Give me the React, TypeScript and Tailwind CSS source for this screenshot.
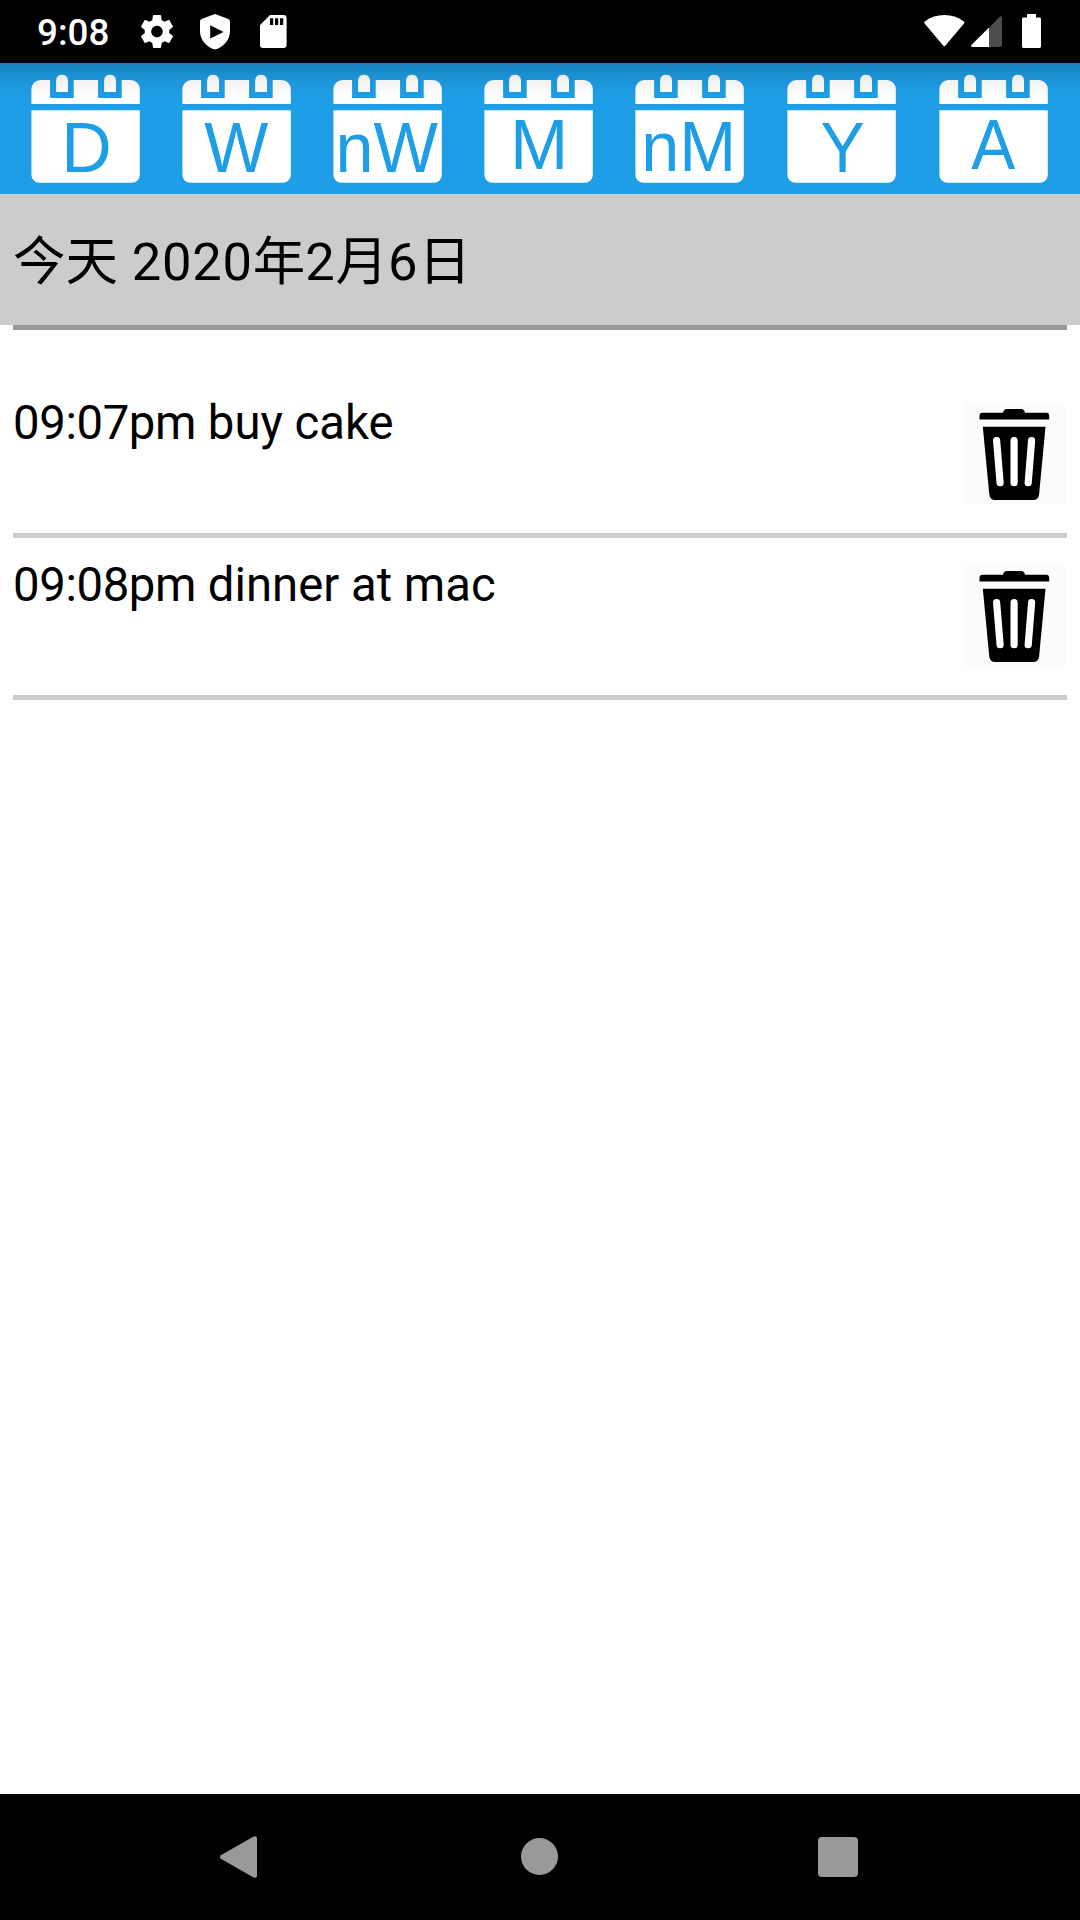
const GEAR =
  'M19.43 12.98c.04-.32.07-.64.07-.98s-.03-.66-.07-.98l2.11-1.65c.19-.15.24-.42.12-.64l-2-3.46c-.12-.22-.39-.3-.61-.22l-2.49 1c-.52-.4-1.08-.73-1.69-.98l-.38-2.65C14.46 2.18 14.25 2 14 2h-4c-.25 0-.46.18-.49.42l-.38 2.65c-.61.25-1.17.59-1.69.98l-2.49-1c-.23-.09-.49 0-.61.22l-2 3.46c-.13.22-.07.49.12.64l2.11 1.65c-.04.32-.07.65-.07.98s.03.66.07.98l-2.11 1.65c-.19.15-.24.42-.12.64l2 3.46c.12.22.39.3.61.22l2.49-1c.52.4 1.08.73 1.69.98l.38 2.65c.03.24.24.42.49.42h4c.25 0 .46-.18.49-.42l.38-2.65c.61-.25 1.17-.59 1.69-.98l2.49 1c.23.09.49 0 .61-.22l2-3.46c.12-.22.07-.49-.12-.64l-2.11-1.65zM12 15.5c-1.93 0-3.5-1.57-3.5-3.5s1.57-3.5 3.5-3.5 3.5 1.57 3.5 3.5-1.57 3.5-3.5 3.5z';

type Tab = { label: string; x: number; baseline: number; width: number; gap: string };

// x is the pen position, baseline and width are the label's placement inside the 109px icon
const tabs: Tab[] = [
  { label: 'D', x: 29.8, baseline: 97.5, width: 50.5, gap: '' },
  { label: 'W', x: 21.8, baseline: 97.5, width: 64, gap: 'ml-[42px]' },
  { label: 'nW', x: 2.2, baseline: 97.8, width: 102.5, gap: 'ml-[42px]' },
  { label: 'M', x: 25.7, baseline: 95.2, width: 58.3, gap: 'ml-[42px]' },
  { label: 'nM', x: 5.9, baseline: 96.5, width: 95, gap: 'ml-[42px]' },
  { label: 'Y', x: 33, baseline: 97.8, width: 44.2, gap: 'ml-[43px]' },
  { label: 'A', x: 31.9, baseline: 95.2, width: 44, gap: 'ml-[43px]' },
];

const events = [
  { time: '09:07pm', title: 'buy cake' },
  { time: '09:08pm', title: 'dinner at mac' },
];

function CalendarTab({ label, x, baseline, width, gap }: Tab) {
  return (
    <button className={`block h-[109px] w-[109px] shrink-0 ${gap}`} aria-label={label}>
      <svg viewBox="-0.4 0 109 109" className="block h-full w-full overflow-visible">
        <path
          fill="#fff"
          d="M9 6H18.7V24H42.3V6H66.7V24H90.3V6H99.4A9 9 0 0 1 108.4 15V30H0V15A9 9 0 0 1 9 6ZM24.7 18V6A6 6 0 0 1 36.6 6V18ZM72.7 18V6A6 6 0 0 1 84.6 6V18ZM0 36.3H108.4V100.8A8 8 0 0 1 100.4 108.8H8A8 8 0 0 1 0 100.8Z"
        />
        <text
          x={x}
          y={baseline}
          textLength={width}
          lengthAdjust="spacingAndGlyphs"
          fill="#1e9ee6"
          fontSize="71"
          fontFamily="'Liberation Sans', sans-serif"
        >
          {label}
        </text>
      </svg>
    </button>
  );
}

function StatusBar() {
  return (
    <header className="flex h-[63px] items-center bg-black pl-[37px] text-white">
      <span className="w-[104px] pt-[2px] text-[36.75px] leading-[61px] font-medium">9:08</span>
      <svg viewBox="2.25 2 19.5 20" className="h-[33px] w-[32px]" fill="#fff">
        <path d={GEAR} />
      </svg>
      <svg viewBox="0 0 30 36" className="ml-[27px] h-[36px] w-[30px]" fill="#fff" fillRule="evenodd">
        <path d="M15 0L28.4 5Q30 5.7 30 7.4V17C30 25.5 24 33 15 35.6C6 33 0 25.5 0 17V7.4Q0 5.7 1.6 5ZM10.2 11.2V24.6L23.6 17.9Z" />
      </svg>
      <svg viewBox="0 0 27 33" className="ml-[30px] h-[33px] w-[27px]" fill="#fff" fillRule="evenodd">
        <path d="M10 0H23.6Q26.6 0 26.6 3V30Q26.6 33 23.6 33H3Q0 33 0 30V10ZM10 3.3V10H13.2V3.3ZM15 3.3V10H18.2V3.3ZM20 3.3V10H23.2V3.3Z" />
      </svg>
      <svg viewBox="0 0 41 32" className="mr-[6px] mb-[2px] ml-auto h-[32px] w-[41px]" fill="#fff">
        <path d="M.6 8.4Q-.4 7.4.8 6.4C6.5 2 13 0 20.3 0S34 2 39.8 6.4Q41 7.4 40 8.4L21.5 30.6Q20.3 32 19.1 30.6Z" />
      </svg>
      <svg viewBox="0 0 31 31" className="mr-[20px] h-[31px] w-[31px]">
        <path fill="#4d4d4d" d="M18 12L28.8 .6Q31 -.6 31 1.8V29Q31 31 29 31H18Z" />
        <path fill="#fff" d="M18 11.4V31H1.6Q-.8 31 .6 28.8Z" />
      </svg>
      <svg viewBox="0 0 19 34" className="mr-[39px] mb-px h-[34px] w-[19px]" fill="#fff">
        <path d="M5 0H14V3.5H17.6Q19 3.5 19 4.9V32.6Q19 34 17.6 34H1.4Q0 34 0 32.6V4.9Q0 3.5 1.4 3.5H5Z" />
      </svg>
    </header>
  );
}

function TrashIcon() {
  return (
    <svg viewBox="963.5 403 103 102" className="block h-[102px] w-[103px]">
      <path d="M980 419.4V415.6Q980 412.7 983 412.7H1003.6Q1004 409 1007.5 409H1021.5Q1025 409 1025.4 412.7H1046.7Q1049.7 412.7 1049.7 415.6V419.4Z" />
      <path d="M983.3 426.8H1046L1039.6 494.5Q1038.8 500 1033.5 500H995.8Q990.5 500 989.8 494.5Z" />
      <path
        d="M997.1 440.5L1000.6 482.7M1014.6 440.5V482.7M1032.1 440.5L1028.7 482.7"
        stroke="#fff"
        strokeWidth="7.2"
        strokeLinecap="round"
      />
    </svg>
  );
}

export default function App() {
  return (
    <div className="flex h-[1920px] w-[1080px] flex-col overflow-hidden bg-white font-[Roboto,'Noto_Sans_CJK_SC',sans-serif] text-black">
      <StatusBar />
      <nav className="relative flex h-[131px] shrink-0 items-start bg-[#1e9ee6] pt-[11px] pl-[31px]">
        {tabs.map((tab) => (
          <CalendarTab key={tab.label} {...tab} />
        ))}
        <div className="pointer-events-none absolute inset-x-0 top-0 h-[36px] bg-linear-to-b from-black/18 via-black/5 to-transparent" />
      </nav>
      <h1 className="h-[131px] shrink-0 bg-[#cccccc] pl-[13px] text-[52.5px] leading-[136px] font-normal whitespace-nowrap">
        今天<span className="tracking-[0.75px]"> 2020</span>年<span className="tracking-[0.75px]">2</span>月
        <span className="tracking-[0.75px]">6</span>日
      </h1>
      <main className="flex-1 px-[13px]">
        <div className="h-[5px] bg-[#999999]" />
        <ul className="pt-[46px]">
          {events.map((event) => (
            <li
              key={event.time}
              className="flex h-[162px] items-start justify-between border-b-[5px] border-[#cccccc]"
            >
              <span className="pt-[19px] text-[47.25px] leading-[56px] whitespace-nowrap">
                <span className="tracking-[-0.36px]">{event.time}</span> {event.title}
              </span>
              <button className="mt-[27px] mr-px bg-[#fcfcfc]" aria-label="Delete">
                <TrashIcon />
              </button>
            </li>
          ))}
        </ul>
      </main>
      <footer className="flex h-[126px] shrink-0 items-center bg-black">
        <svg viewBox="0 0 37 42" className="ml-[220px] h-[42px] w-[37px]" fill="#999">
          <path d="M.8 19.2L33.6 .5Q37 -.8 37 2.6V39.4Q37 42.8 33.6 41.5L.8 22.8Q-.8 21 .8 19.2Z" />
        </svg>
        <div className="mb-px ml-[264px] h-[37px] w-[37px] rounded-full bg-[#999999]" />
        <div className="ml-[260px] h-[40px] w-[40px] rounded-[4px] bg-[#999999]" />
      </footer>
    </div>
  );
}
